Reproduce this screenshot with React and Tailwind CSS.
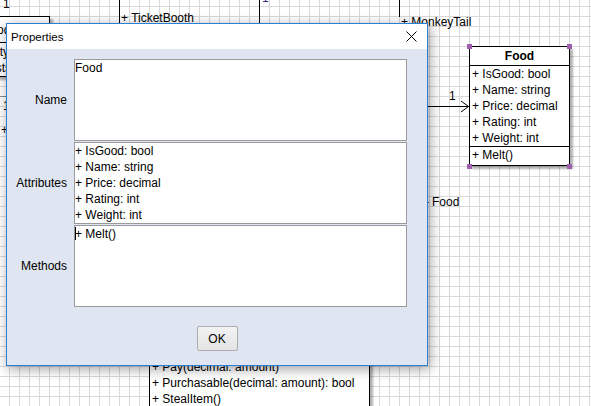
import React from "react";

const foodAttrs = [
  "+ IsGood: bool",
  "+ Name: string",
  "+ Price: decimal",
  "+ Rating: int",
  "+ Weight: int",
];

const standMethods = [
  "+ Buy()",
  "+ Pay(decimal: amount)",
  "+ Purchasable(decimal: amount): bool",
  "+ StealItem()",
];

// Small purple resize grip shown on the corners of the selected class
function Handle({ className }) {
  return <div className={`absolute h-[5px] w-[5px] bg-[#a05fae] ${className}`} />;
}

function FieldRow({ label, children }) {
  return (
    <div className="flex h-[82px] items-center">
      <div className="w-[60px] text-right">{label}</div>
      <div className="ml-[7px] h-full w-[333px] overflow-hidden border border-[#9a9a9a] bg-white leading-[16px]">
        {children}
      </div>
    </div>
  );
}

function PropertiesDialog() {
  return (
    <div className="absolute left-[6px] top-[23px] flex h-[343px] w-[422px] flex-col border border-[#2a7fd4] shadow-[2px_3px_12px_rgba(0,0,0,0.38)]">
      <div className="flex h-[25px] items-center justify-between bg-white pl-[4px] pr-[10px]">
        <span className="text-[11.5px]">Properties</span>
        <svg width="11" height="11" viewBox="0 0 11 11" className="mb-[1px]">
          <path d="M0.5 0.5 L10.5 10.5 M10.5 0.5 L0.5 10.5" stroke="#000" strokeWidth="1" fill="none" />
        </svg>
      </div>
      <div className="flex flex-1 flex-col bg-[#dfe6f1] pt-[10px]">
        <div className="flex flex-col gap-[1px]">
          <FieldRow label="Name">
            <div>Food</div>
          </FieldRow>
          <FieldRow label="Attributes">
            {foodAttrs.map((a) => (
              <div key={a}>{a}</div>
            ))}
          </FieldRow>
          <FieldRow label="Methods">
            <div>
              <span className="mr-[-1px] inline-block h-[13px] w-px bg-black align-[-2px]" />
              + Melt()
            </div>
          </FieldRow>
        </div>
        <button className="mx-auto mt-[19px] h-[25px] w-[41px] rounded-[2px] border border-[#adadad] bg-[linear-gradient(#f2f2f2,#e4e4e4)] text-[12px] leading-none">
          OK
        </button>
      </div>
    </div>
  );
}

export default function App() {
  return (
    <div className="relative h-[406px] w-[591px] overflow-hidden bg-white font-['Liberation_Sans',Arial,sans-serif] text-[12px] leading-[16px] text-black [background-image:linear-gradient(to_right,#d9d9d9_1px,transparent_1px),linear-gradient(to_bottom,#d9d9d9_1px,transparent_1px)] [background-position:9px_6px] [background-size:10px_10px]">
      {/* class on the far left, mostly behind the dialog */}
      <div className="absolute left-[3px] top-[-4px]">1</div>
      <div className="absolute left-[-81px] top-[16px] flex h-[61px] w-[131px] flex-col overflow-hidden border border-black bg-white shadow-[3px_3px_2px_rgba(0,0,0,0.3)]">
        <div className="flex h-[27px] items-center border-b border-black pl-[65px]">Product</div>
        <div className="flex flex-col whitespace-nowrap pt-[1px]">
          <div className="pl-[34px]">+ Quantity: int</div>
          <div className="pl-[50px]">+ Costs</div>
        </div>
      </div>
      <div className="absolute left-0 top-[96px] h-px w-[12px] bg-[#8a8a8a]" />
      <div className="absolute left-[3px] top-[98px]">1</div>
      <div className="absolute left-[1px] top-[122px]">+</div>

      {/* association ends along the top edge */}
      <div className="absolute left-[119px] top-0 h-[24px] w-px bg-black" />
      <div className="absolute left-[121px] top-[10px]">+ TicketBooth</div>
      <div className="absolute left-[259px] top-0 h-[24px] w-px bg-black" />
      <div className="absolute left-[262px] top-[-10px] text-[#3a2a8a]">1</div>
      <div className="absolute left-[399px] top-0 h-[17px] w-px bg-black" />
      <div className="absolute left-[401px] top-[14px]">+ MonkeyTail</div>

      {/* association into Food */}
      <svg className="absolute left-[426px] top-[98px]" width="46" height="16" viewBox="0 0 46 16">
        <path d="M0 8.5 H42.5" stroke="#000" strokeWidth="1" fill="none" />
        <path d="M35 3 L42.5 8.5 L35 14" stroke="#000" strokeWidth="1" fill="none" />
      </svg>
      <div className="absolute left-[449px] top-[88px]">1</div>
      <div className="absolute left-[428px] top-[202px] h-px w-px bg-[#555]" />
      <div className="absolute left-[432px] top-[194px]">Food</div>

      {/* selected Food class */}
      <div className="absolute left-[469px] top-[46px] w-[101px] border border-black bg-white shadow-[3px_3px_2px_rgba(0,0,0,0.3)]">
        <div className="flex h-[19px] items-center justify-center border-b border-black font-bold">Food</div>
        <div className="border-b border-black pl-[2px]">
          {foodAttrs.map((a) => (
            <div key={a} className="h-[16px] whitespace-nowrap">
              {a}
            </div>
          ))}
        </div>
        <div className="h-[18px] pl-[2px]">+ Melt()</div>
      </div>
      <Handle className="left-[467px] top-[44px]" />
      <Handle className="left-[567px] top-[44px]" />
      <Handle className="left-[467px] top-[164px]" />
      <Handle className="left-[567px] top-[164px]" />

      {/* stand class below the dialog */}
      <div className="absolute left-[149px] top-[342px] h-[100px] w-[221px] border border-black bg-white pl-[2px] shadow-[3px_3px_2px_rgba(0,0,0,0.3)]">
        {standMethods.map((m) => (
          <div key={m} className="whitespace-nowrap">
            {m}
          </div>
        ))}
      </div>

      <PropertiesDialog />
    </div>
  );
}
